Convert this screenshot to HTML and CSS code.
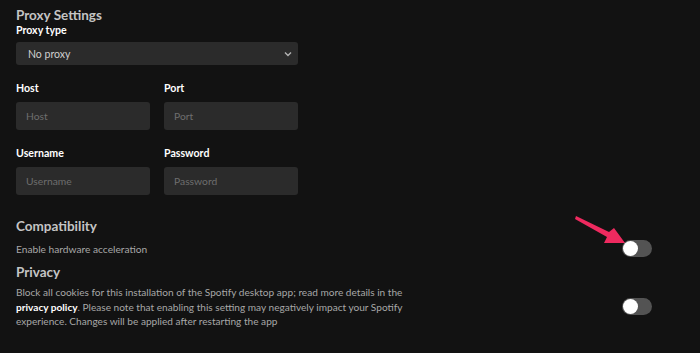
FILE: index.html
```html
<!DOCTYPE html>
<html>
<head>
<meta charset="utf-8">
<link rel="stylesheet" href="styles.css">
</head>
<body>
<div class="page">
  <h2 class="section-title first">Proxy Settings</h2>
  <div class="label">Proxy type</div>
  <div class="select">
    <span>No proxy</span>
    <svg class="chev" width="8" height="6" viewBox="0 0 8 6"><path d="M1 1.5 L4 4.5 L7 1.5" fill="none" stroke="#b3b3b3" stroke-width="1.4"/></svg>
  </div>
  <div class="pair">
    <div class="field">
      <div class="label">Host</div>
      <div class="input">Host</div>
    </div>
    <div class="field">
      <div class="label">Port</div>
      <div class="input">Port</div>
    </div>
  </div>
  <div class="pair">
    <div class="field">
      <div class="label">Username</div>
      <div class="input">Username</div>
    </div>
    <div class="field">
      <div class="label">Password</div>
      <div class="input">Password</div>
    </div>
  </div>

  <h2 class="section-title compat">Compatibility</h2>
  <div class="row row-hw">
    <div class="text">Enable hardware acceleration</div>
    <div class="toggle"><span class="knob"></span></div>
  </div>

  <h2 class="section-title privacy">Privacy</h2>
  <div class="row row-priv">
    <p class="text para">Block all cookies for this installation of the Spotify desktop app; read more details in the <b>privacy policy</b>. Please note that enabling this setting may negatively impact your Spotify experience. Changes will be applied after restarting the app</p>
    <div class="toggle"><span class="knob"></span></div>
  </div>
</div>
<svg class="arrow" width="60" height="40" viewBox="572 210 60 40">
  <polygon points="576,216 609,232 614,228 625,243 604,243 607,237 575,219" fill="#ee2a5f"/>
</svg>
</body>
</html>
```

FILE: styles.css
```css
html, body {
  margin: 0;
  padding: 0;
  background: #121212;
}
body {
  width: 700px;
  height: 353px;
  overflow: hidden;
  position: relative;
  font-family: "Lato", "Noto Sans", sans-serif;
  color: #a7a7a7;
}
.page {
  padding: 7px 48px 0 16px;
}
.section-title {
  margin: 0;
  font-size: 13.5px;
  line-height: 16px;
  font-weight: 700;
  color: #c4c4c4;
}
.label {
  font-size: 10.6px;
  line-height: 14px;
  font-weight: 700;
  color: #ffffff;
}
.select {
  margin-top: 5px;
  width: 282px;
  height: 23px;
  box-sizing: border-box;
  background: #2b2b2b;
  border-radius: 3px;
  display: flex;
  align-items: center;
  justify-content: space-between;
  padding: 0 6px 0 12px;
  font-size: 10.5px;
  color: #cfcfcf;
}
.chev { display: block; }
.pair {
  display: flex;
  gap: 14px;
  margin-top: 16px;
}
.field { width: 134px; }
.input {
  margin-top: 7px;
  height: 28px;
  box-sizing: border-box;
  background: #2b2b2b;
  border-radius: 3px;
  padding-left: 10px;
  display: flex;
  align-items: center;
  font-size: 10.3px;
  color: #6e6e6e;
}
.pair + .pair { margin-top: 16px; }
.compat { margin-top: 23px; }
.privacy { margin-top: 7px; }
.row {
  display: flex;
  justify-content: space-between;
  align-items: center;
}
.row-hw { margin-top: 6px; }
.row-priv { margin-top: 5px; }
.text {
  font-size: 10.2px;
  line-height: 14px;
  color: #a7a7a7;
}
.para {
  margin: 0;
  width: 392px;
  font-size: 10.1px;
  line-height: 14.5px;
}
.para b { color: #fff; font-weight: 700; }
.toggle {
  width: 30px;
  height: 17px;
  border-radius: 9px;
  background: #535353;
  position: relative;
  flex: none;
}
.knob {
  position: absolute;
  left: 1px;
  top: 1px;
  width: 15px;
  height: 15px;
  border-radius: 50%;
  background: #ffffff;
}
.arrow {
  position: absolute;
  left: 572px;
  top: 210px;
}
```
